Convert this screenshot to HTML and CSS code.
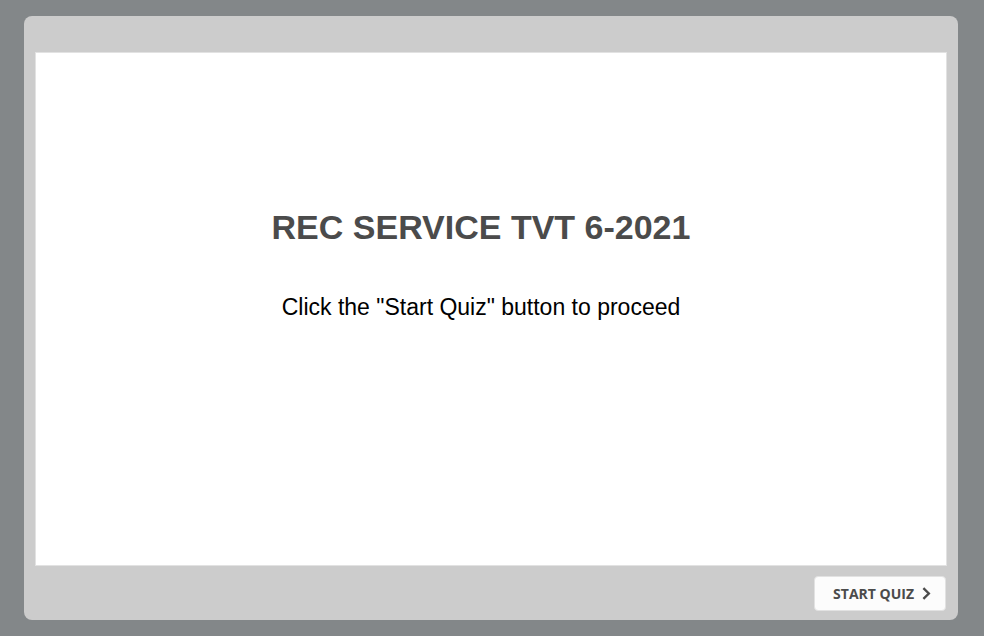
FILE: index.html
```html
<!DOCTYPE html>
<html lang="en">
<head>
<meta charset="utf-8">
<title>REC SERVICE TVT 6-2021</title>
<link rel="stylesheet" href="styles.css">
</head>
<body>
<main class="player">
  <section class="slide">
    <h1 class="title">REC SERVICE TVT 6-2021</h1>
    <p class="hint">Click the "Start Quiz" button to proceed</p>
  </section>
  <footer class="controls">
    <button class="start" type="button">START QUIZ
      <svg class="chevron" viewBox="0 0 9 13" aria-hidden="true"><path d="M1.4 1.2 6.8 6.5 1.4 11.8"/></svg>
    </button>
  </footer>
</main>
</body>
</html>
```
FILE: styles.css
```css
* { box-sizing: border-box; }
body {
  margin: 0;
  min-height: 100vh;
  padding: 16px 26px 16px 24px;
  display: flex;
  background: #838789;
  font-family: "Liberation Sans", Arial, sans-serif;
}
.player {
  flex: 1;
  display: flex;
  flex-direction: column;
  padding: 36px 11px 9px;
  border-radius: 8px;
  background: #cccccc;
}
.slide {
  flex: 1;
  padding: 154px 20px 20px;
  border: 1px solid #e2e2e2;
  background: #ffffff;
  text-align: center;
}
.title {
  margin: 0 0 44px;
  padding-right: 20px;
  font-size: 34px;
  font-weight: 700;
  line-height: 40px;
  color: #4b4b4b;
}
.hint {
  margin: 0;
  padding-right: 20px;
  font-size: 23px;
  line-height: 32px;
  color: #000000;
}
.controls {
  display: flex;
  justify-content: flex-end;
  padding: 10px 1px 0 0;
}
.start {
  display: flex;
  align-items: center;
  gap: 8px;
  height: 35px;
  padding: 0 14px 0 18px;
  border: 1px solid #e2e2e2;
  border-radius: 4px;
  background: #fcfcfc;
  color: #4b4b4b;
  font: 700 14px "Open Sans", sans-serif;
}
.chevron {
  width: 9px;
  height: 13px;
  fill: none;
  stroke: currentColor;
  stroke-width: 2.4;
}
```
